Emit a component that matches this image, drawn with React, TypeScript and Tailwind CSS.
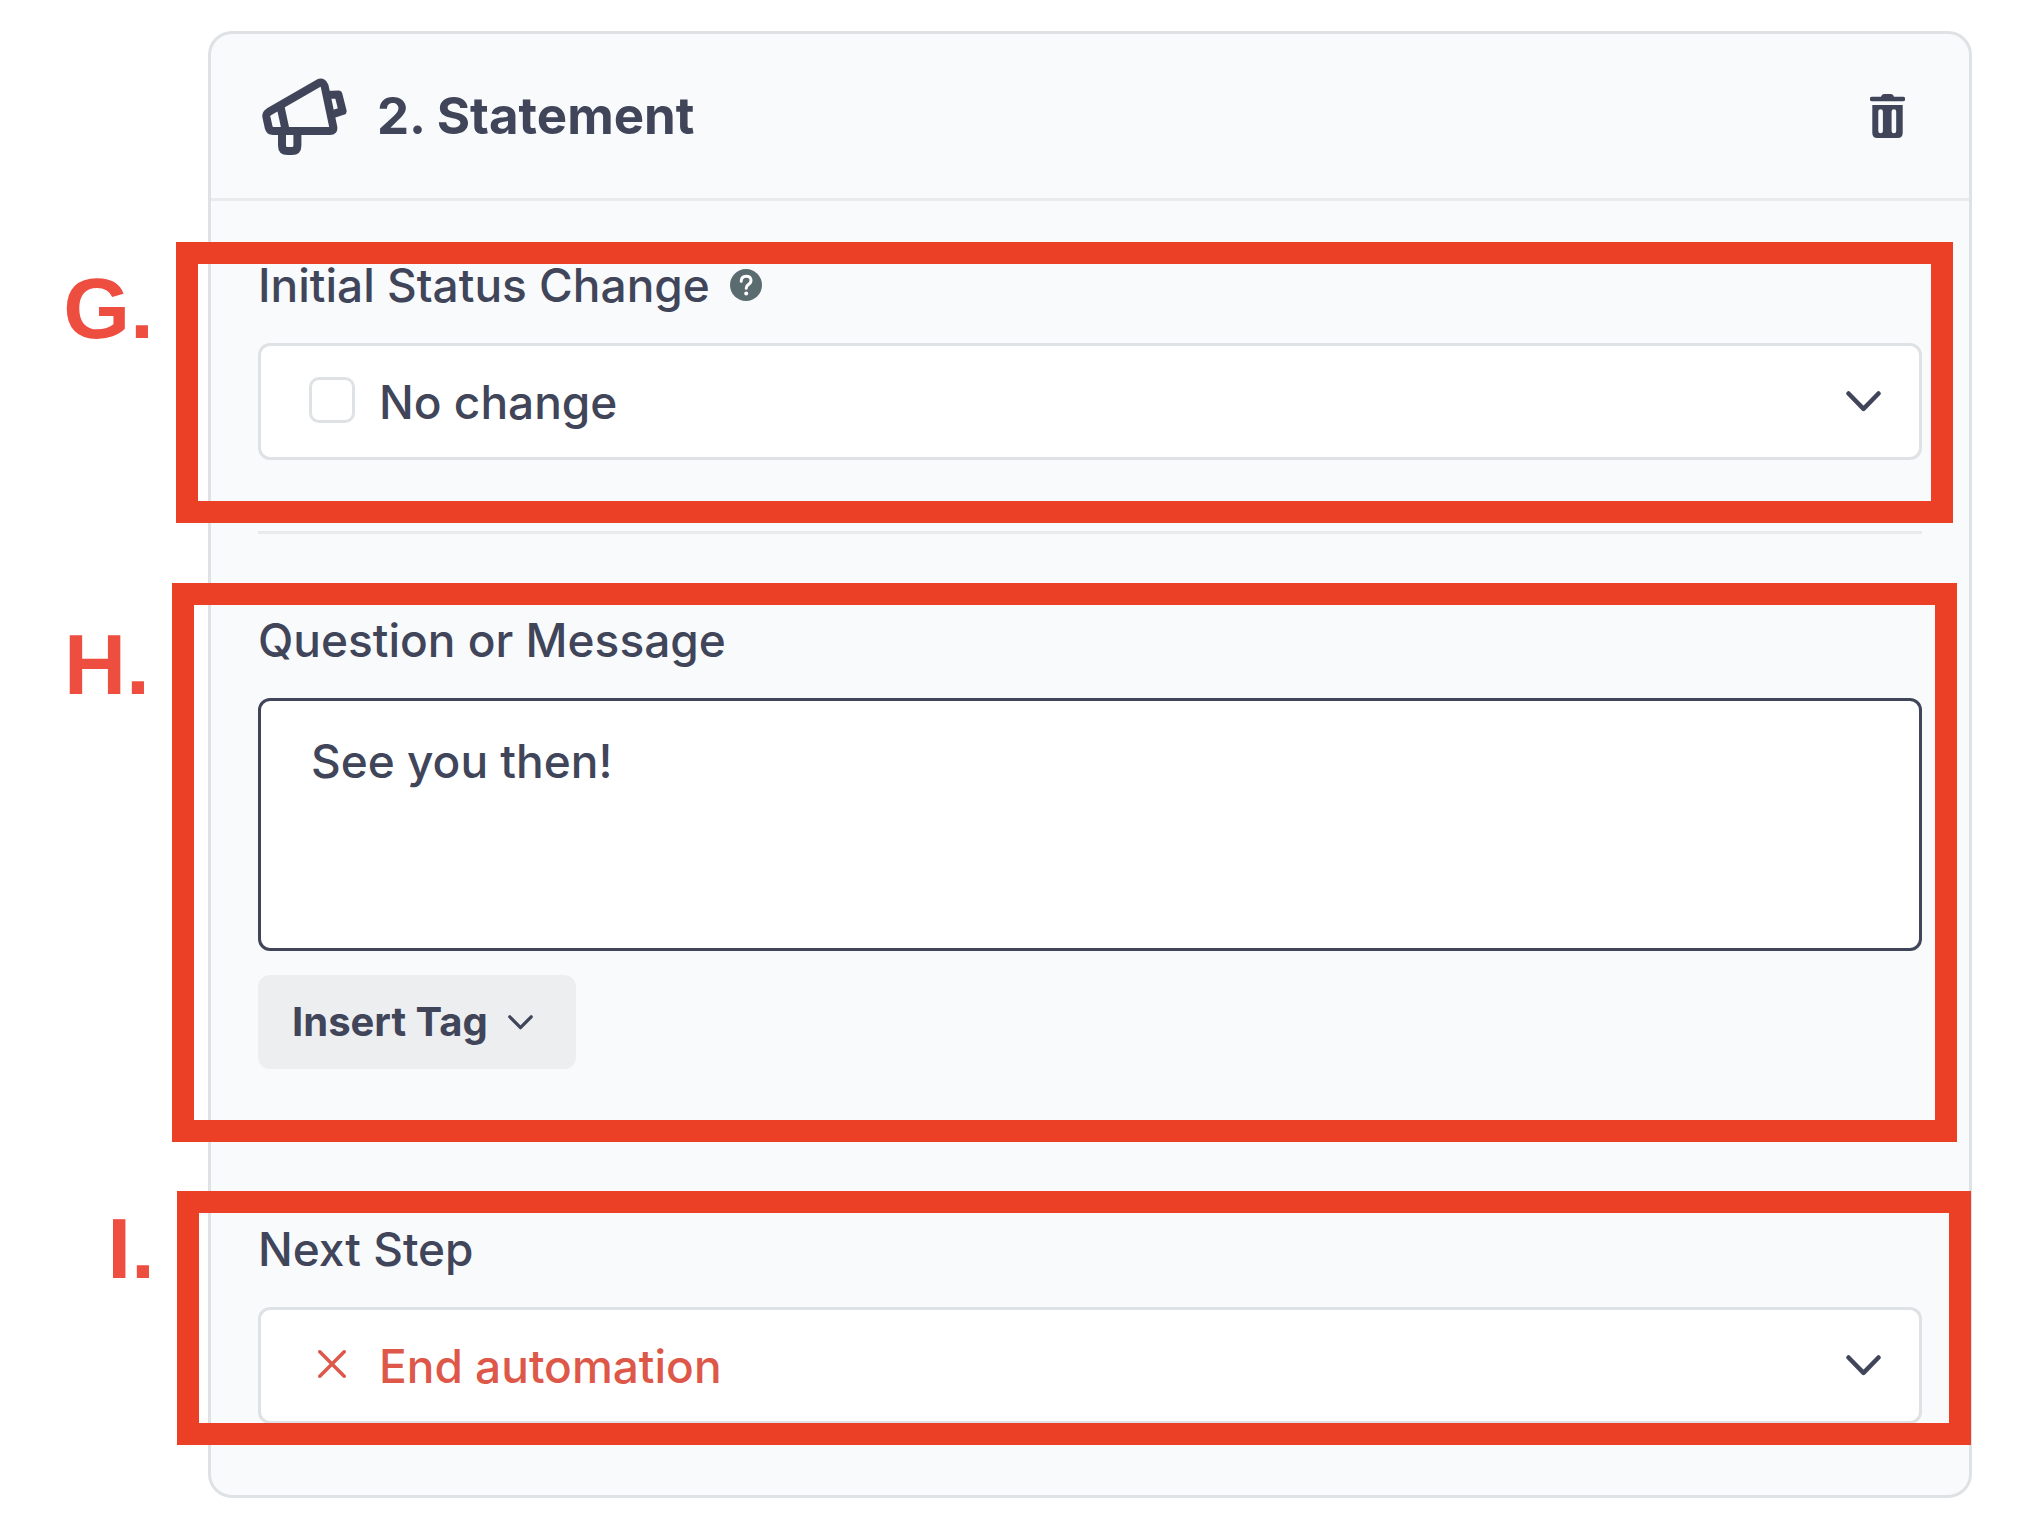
import type { ReactNode } from "react";
import { useState } from "react";
import clsx from "clsx";

type IconProps = {
  className?: string;
};

type HighlightProps = {
  letter: string;
  frameClass: string;
  letterClass: string;
};

type SelectFieldProps = {
  id: string;
  options: string[];
  leading: ReactNode;
  danger?: boolean;
};

const labelClass = "text-[46px] leading-[56px] font-medium";

function MegaphoneIcon({ className }: IconProps) {
  return (
    <svg
      className={className}
      viewBox="0 0 85 77"
      fill="none"
      stroke="currentColor"
      strokeWidth="8"
      strokeLinejoin="round"
      aria-hidden="true"
    >
      <path d="M56.5 5.2 7 33.8Q3.8 35.8 4.4 39L6.8 49.8Q7.6 53 11 53H68Q72 53 71.3 49.2L62.6 8Q61 3 56.5 5.2Z" />
      <path d="M18.6 29 23.6 52" />
      <path d="M65 17 76.4 16.6 80.6 33 70 36.4" />
      <path d="M20 53V67.5Q20 73 25.5 73H30Q35.4 73 35.4 67.5V53" />
    </svg>
  );
}

function TrashIcon({ className }: IconProps) {
  return (
    <svg className={className} viewBox="0 0 35 44" fill="currentColor" aria-hidden="true">
      <path d="M2 2.7H11Q11.6 0 14 0H21Q23.4 0 24 2.7H33A2.2 2.2 0 0 1 33 7.2H2A2.2 2.2 0 0 1 2 2.7Z" />
      <path
        fillRule="evenodd"
        d="M2.3 11H32.7V39Q32.7 44 27.7 44H7.3Q2.3 44 2.3 39ZM10.6 15.3Q8.3 15.3 8.3 17.6V37Q8.3 39.3 10.6 39.3T12.9 37V17.6Q12.9 15.3 10.6 15.3ZM23.9 15.3Q21.6 15.3 21.6 17.6V37Q21.6 39.3 23.9 39.3T26.2 37V17.6Q26.2 15.3 23.9 15.3Z"
      />
    </svg>
  );
}

function ChevronIcon({ className }: IconProps) {
  return (
    <svg
      className={className}
      viewBox="0 0 35 21"
      fill="none"
      stroke="currentColor"
      strokeWidth="4.5"
      strokeLinecap="round"
      strokeLinejoin="round"
      aria-hidden="true"
    >
      <path d="M2.5 2.5 17.5 17.8 32.5 2.5" />
    </svg>
  );
}

function CrossIcon({ className }: IconProps) {
  return (
    <svg
      className={className}
      viewBox="0 0 28 28"
      fill="none"
      stroke="currentColor"
      strokeWidth="3.5"
      strokeLinecap="round"
      aria-hidden="true"
    >
      <path d="M1.8 1.8 26.2 26.2M26.2 1.8 1.8 26.2" />
    </svg>
  );
}

function HelpIcon({ className }: IconProps) {
  return (
    <svg className={className} viewBox="0 0 32 32" fill="none" aria-hidden="true">
      <circle cx="16" cy="16" r="16" fill="currentColor" />
      <path
        d="M11.2 12.2Q11.2 7.2 16.2 7.2T21 11.6Q21 14 18.3 15.6Q16.2 16.9 16.2 19.2"
        stroke="#fff"
        strokeWidth="3"
        strokeLinecap="round"
      />
      <circle cx="16.2" cy="24.6" r="2" fill="#fff" />
    </svg>
  );
}

// Frame drawn over a section, with its letter hanging in the left margin
function Highlight({ letter, frameClass, letterClass }: HighlightProps) {
  return (
    <div className={clsx("pointer-events-none absolute z-10 border-[22px] border-[#eb4025]", frameClass)}>
      <span
        className={clsx(
          "absolute right-full mr-11 font-['Liberation_Sans',sans-serif] text-[86px] leading-[88px] font-bold text-[#ee4e40]",
          letterClass,
        )}
      >
        {letter}
      </span>
    </div>
  );
}

function SelectField({ id, options, leading, danger }: SelectFieldProps) {
  return (
    <div className="mt-[30px] flex h-[117px] items-center rounded-[12px] border-[3px] border-[#dfe2e4] bg-white pr-[38px] pl-12">
      <div className="mr-6 flex w-[46px] shrink-0 justify-center pb-1">{leading}</div>
      <select
        id={id}
        className={clsx(
          "min-w-0 flex-1 appearance-none bg-transparent text-[46px] leading-[56px] font-medium outline-none",
          danger && "text-[#dd5849]",
        )}
      >
        {options.map((option) => (
          <option key={option}>{option}</option>
        ))}
      </select>
      <ChevronIcon className="h-[21px] w-[35px] shrink-0" />
    </div>
  );
}

export default function App() {
  const [message, setMessage] = useState("See you then!");

  return (
    <main className="min-h-screen bg-white pt-[31px] pr-[70px] pb-[17px] pl-[208px] font-['Inter',sans-serif] text-[#40455a]">
      <article className="rounded-[24px] border-[3px] border-[#dfe2e4] bg-[#f9fafc]">
        <header className="flex h-[167px] items-center border-b-[3px] border-[#e8eaec] pr-16 pl-[51px]">
          <MegaphoneIcon className="h-[77px] w-[85px] shrink-0" />
          <h2 className="ml-[30px] flex-1 text-[51px] leading-[60px] font-bold">2. Statement</h2>
          <button type="button" aria-label="Delete step">
            <TrashIcon className="h-[44px] w-[35px]" />
          </button>
        </header>

        <div className="px-[47px] pt-14 pb-[71px]">
          <section className="relative">
            <div className="flex items-center gap-5">
              <label htmlFor="status" className={labelClass}>
                Initial Status Change
              </label>
              <button type="button" aria-label="About initial status change" className="text-[#5b6c70]">
                <HelpIcon className="size-8" />
              </button>
            </div>
            <SelectField
              id="status"
              options={["No change"]}
              leading={
                <input
                  type="checkbox"
                  aria-label="Status"
                  className="size-[46px] appearance-none rounded-[10px] border-[3px] border-[#dfe2e4] bg-white"
                />
              }
            />
            <Highlight letter="G." frameClass="-top-[15px] -right-[31px] -bottom-[63px] -left-[82px]" letterClass="top-0" />
          </section>

          <hr className="mt-[71px] mb-[78px] border-t-[3px] border-[#e8eaec]" />

          <section className="relative">
            <label htmlFor="message" className={clsx(labelClass, "block")}>
              Question or Message
            </label>
            <textarea
              id="message"
              rows={3}
              value={message}
              onChange={(event) => setMessage(event.target.value)}
              className="mt-[30px] block w-full resize-none rounded-[12px] border-[3px] border-[#40455a] bg-white px-[50px] pt-8 pb-[47px] text-[46px] leading-[56px] font-medium outline-none"
            />
            <button
              type="button"
              className="mt-6 flex h-[94px] items-center gap-5 rounded-[12px] bg-[#edeeef] pr-[43px] pl-[34px] text-[40px] leading-[48px] font-bold"
            >
              Insert Tag
              <ChevronIcon className="h-[15px] w-[25px]" />
            </button>
            <Highlight letter="H." frameClass="-top-[29px] -right-[35px] -bottom-[73px] -left-[86px]" letterClass="top-[15px]" />
          </section>

          <section className="relative mt-[152px]">
            <label htmlFor="next-step" className={clsx(labelClass, "block")}>
              Next Step
            </label>
            <SelectField
              id="next-step"
              options={["End automation"]}
              leading={<CrossIcon className="size-7 text-[#dd5849]" />}
              danger
            />
            <Highlight letter="I." frameClass="-top-[30px] -right-[49px] -bottom-[21px] -left-[81px]" letterClass="-top-[9px]" />
          </section>
        </div>
      </article>
    </main>
  );
}
